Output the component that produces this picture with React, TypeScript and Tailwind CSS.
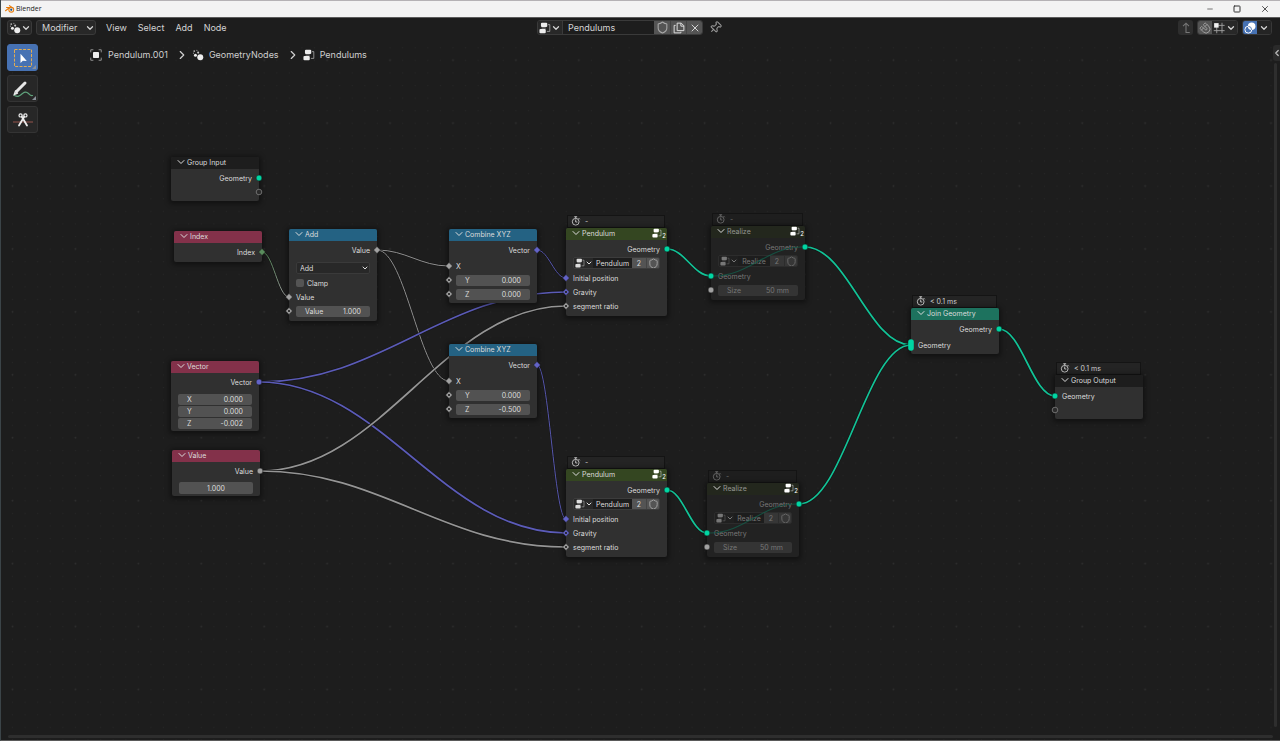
import React, { useState } from "react";
import { ChevronDown, ChevronLeft, ChevronRight, Magnet, Minus, Pin, Shield, Square, X } from "lucide-react";

type SocketShape = "circle" | "diamond" | "diamondDot" | "virtual" | "multi";

interface SocketProps {
  shape: SocketShape;
  color: string;
  side: "left" | "right";
}

const GEOMETRY = "#00d6a3";
const VECTOR = "#6363c7";
const FLOAT = "#a1a1a1";
const INTEGER = "#598c5c";

const Socket: React.FC<SocketProps> = ({ shape, color, side }) => (
  <svg
    viewBox="0 0 14 14"
    className={`absolute top-0 h-[14px] w-[14px] ${side === "left" ? "left-[-7px]" : "right-[-7px]"}`}
  >
    {shape === "circle" && <circle cx="7" cy="7" r="2.9" fill={color} stroke="#151515" strokeWidth="0.5" />}
    {shape === "virtual" && <circle cx="7" cy="7" r="2.8" fill="#2c2c2c" stroke="#757575" strokeWidth="0.9" />}
    {shape === "multi" && <rect x="4.2" y="1.2" width="5.6" height="11.6" rx="2.8" fill={color} />}
    {(shape === "diamond" || shape === "diamondDot") && (
      <path d="M7 3.6 10.4 7 7 10.4 3.6 7Z" fill={color} stroke="#151515" strokeWidth="0.4" />
    )}
    {shape === "diamondDot" && <circle cx="7" cy="7" r="1.1" fill="#1b1b1b" />}
  </svg>
);

const GeometryNodesIcon = ({ className }: { className: string }) => (
  <svg viewBox="0 0 16 16" className={className} fill="currentColor">
    <circle cx="11" cy="11" r="4" />
    <circle cx="4.6" cy="8.4" r="2" />
    <circle cx="8.2" cy="4.8" r="1.4" opacity="0.8" />
    <circle cx="3" cy="2.8" r="1.2" opacity="0.7" />
    <circle cx="6.5" cy="1.8" r="0.8" opacity="0.6" />
    <circle cx="2" cy="5.6" r="0.8" opacity="0.6" />
  </svg>
);

const NodeTreeIcon = ({ className }: { className: string }) => (
  <svg viewBox="0 0 16 16" className={className}>
    <rect x="2.6" y="1" width="8.4" height="5.6" rx="1.4" fill="currentColor" />
    <rect x="0.6" y="9.4" width="8.4" height="5.6" rx="1.4" fill="currentColor" />
    <path d="M12 3.5h2.4v9H10.5M3.5 8h5.5" fill="none" stroke="currentColor" strokeWidth="1.2" opacity="0.6" />
  </svg>
);

const ObjectIcon = () => (
  <svg viewBox="0 0 16 16" className="h-3 w-3">
    <rect x="4" y="4" width="8" height="8" rx="1" fill="#ededed" />
    <path
      d="M1 4.5V1h3.5M11.5 1H15v3.5M15 11.5V15h-3.5M4.5 15H1v-3.5"
      fill="none"
      stroke="#9a9a9a"
      strokeWidth="1.2"
    />
  </svg>
);

const StopwatchIcon = () => (
  <svg viewBox="0 0 16 16" className="h-[10px] w-[10px]" fill="none" stroke="currentColor" strokeWidth="1.4">
    <circle cx="7.5" cy="9.2" r="5.4" />
    <path d="M5.2 1.2h4.6M7.5 1.2v2.6M7.5 5.6v4h2.6M12 3.2l2 2" />
  </svg>
);

const DuplicateIcon = () => (
  <svg viewBox="0 0 16 16" className="h-3 w-3" fill="none" stroke="#e0e0e0" strokeWidth="1.3">
    <path d="M5.5 1.5h5.5l3.5 3.5v6.5h-9zM10.5 1.5v4h4" />
    <path d="M3.5 4.5h-2v10h9v-1.5" />
  </svg>
);

const SnapGridIcon = () => (
  <svg viewBox="0 0 16 16" className="h-3 w-3" fill="none" stroke="#a0a0a0" strokeWidth="1.2">
    <path d="M5 6v9M12 1v14M7 4.5h8.5M1 11.5h14.5" />
    <rect x="1.5" y="1.5" width="6" height="6" fill="#f0f0f0" stroke="none" />
  </svg>
);

const OverlayIcon = () => (
  <svg viewBox="0 0 16 16" className="h-3 w-3">
    <circle cx="10.2" cy="5.8" r="5" fill="#fff" />
    <circle cx="5.8" cy="10.2" r="4.6" fill="none" stroke="#fff" strokeWidth="1.3" />
    <path d="M5.8 5.8a4.6 4.6 0 0 1 4.4 4.6" fill="none" stroke="#4772b3" strokeWidth="1.2" />
  </svg>
);

const BlenderLogo = () => (
  <svg viewBox="0 0 20 16" className="h-2 w-[10px]">
    <path d="M9 1.2 17 7.2M1 11.5 10 4.5M3 5h9" stroke="#e87d0d" strokeWidth="2.2" strokeLinecap="round" />
    <circle cx="12.5" cy="9.5" r="5.8" fill="#e87d0d" />
    <circle cx="12.5" cy="9.5" r="3.7" fill="#fff" />
    <circle cx="12.5" cy="9.5" r="2.3" fill="#265787" />
  </svg>
);

const TitleBar = () => (
  <div className="flex h-[18px] shrink-0 items-center justify-between border-t border-b border-t-[#b5b2b5] border-b-[#5c5c5c] bg-[#f3f3f3] pl-[4px] font-['Open_Sans',sans-serif] text-[7px] text-[#222]">
    <div className="flex items-center gap-[1px]">
      <BlenderLogo />
      <span>Blender</span>
    </div>
    <div className="flex items-center gap-[19px] pr-[10px] text-[#333]">
      <button aria-label="Minimize">
        <Minus size={8} strokeWidth={2} />
      </button>
      <button aria-label="Maximize">
        <Square size={8} strokeWidth={3} />
      </button>
      <button aria-label="Close">
        <X size={10} strokeWidth={2} />
      </button>
    </div>
  </div>
);

const Header = () => {
  const [treeName, setTreeName] = useState("Pendulums");

  return (
    <header className="grid h-5 shrink-0 grid-cols-[1fr_auto_1fr] items-center pr-[8px] pb-[1px] pl-[6px] text-[9px] text-[#d4d4d4]">
      <div className="flex items-center">
        <button
          aria-label="Editor type"
          className="flex h-[15px] w-[25px] items-center justify-center rounded-[3px] border border-[#3a3a3a] bg-[#282828]"
        >
          <GeometryNodesIcon className="h-3 w-3 text-[#ededed]" />
          <ChevronDown size={10} strokeWidth={3} />
        </button>
        <div className="relative ml-[4px] flex items-center">
          <select
            aria-label="Node tree type"
            className="h-[15px] w-[60px] appearance-none rounded-[3px] border border-[#3a3a3a] bg-[#282828] pl-[5px] leading-none outline-none"
          >
            <option>Modifier</option>
          </select>
          <ChevronDown size={10} strokeWidth={3} className="pointer-events-none absolute right-[1px]" />
        </div>
        <nav className="ml-[10px] flex gap-[11px]">
          <button>View</button>
          <button>Select</button>
          <button>Add</button>
          <button>Node</button>
        </nav>
      </div>

      <div className="flex items-center pr-5">
        <div className="flex h-[15px] overflow-hidden rounded-[3px] border border-[#3a3a3a]">
          <button aria-label="Browse node trees" className="flex w-6 items-center justify-center bg-[#282828]">
            <NodeTreeIcon className="h-3 w-3 text-[#ededed]" />
            <ChevronDown size={10} strokeWidth={3} />
          </button>
          <input
            aria-label="Node tree name"
            value={treeName}
            onChange={(e) => setTreeName(e.target.value)}
            className="w-[92px] border-l border-[#3a3a3a] bg-[#1d1d1d] pl-[5px] outline-none"
          />
          <button aria-label="Fake user" className="flex w-4 items-center justify-center bg-[#545454] text-[#a8a8a8]">
            <Shield size={13} strokeWidth={2} className="shrink-0" />
          </button>
          <button
            aria-label="New node tree"
            className="flex w-4 items-center justify-center border-l border-[#444] bg-[#545454]"
          >
            <DuplicateIcon />
          </button>
          <button aria-label="Unlink" className="flex w-4 items-center justify-center border-l border-[#444] bg-[#545454]">
            <X size={12} strokeWidth={2} />
          </button>
        </div>
        <button aria-label="Pin" className="ml-[6px] text-[#999]">
          <Pin size={13} strokeWidth={2} className="rotate-45" />
        </button>
      </div>

      <div className="flex items-center justify-end">
        <button
          aria-label="Parent node tree"
          className="flex h-[15px] w-[15px] items-center justify-center rounded-[3px] bg-[#2e2e2e] text-[#777]"
        >
          <svg viewBox="0 0 16 16" className="h-3 w-3" fill="none" stroke="currentColor" strokeWidth="1.4">
            <path d="M4 5.5 8 1.5 12 5.5M8 1.5v12.500h5" />
          </svg>
        </button>
        <div className="ml-1 flex h-[15px] overflow-hidden rounded-[3px] border border-[#383838]">
          <button aria-label="Snap" className="flex w-[14px] items-center justify-center bg-[#545454] text-[#a0a0a0]">
            <Magnet size={12} strokeWidth={2} className="shrink-0 rotate-90" />
          </button>
          <button aria-label="Snapping" className="flex w-[25px] items-center justify-center gap-[1px] bg-[#282828]">
            <SnapGridIcon />
            <ChevronDown size={10} strokeWidth={3} />
          </button>
        </div>
        <div className="ml-1 flex h-[15px] overflow-hidden rounded-[3px] border border-[#383838]">
          <button aria-label="Overlays" className="flex w-[14px] items-center justify-center bg-[#4772b3]">
            <OverlayIcon />
          </button>
          <button aria-label="Overlay options" className="flex w-[14px] items-center justify-center bg-[#242424]">
            <ChevronDown size={10} strokeWidth={3} />
          </button>
        </div>
      </div>
    </header>
  );
};

const ToolButton = ({
  label,
  active,
  menu,
  children,
}: {
  label: string;
  active?: boolean;
  menu?: boolean;
  children: React.ReactNode;
}) => (
  <button
    aria-label={label}
    className={`relative flex h-[27px] w-[31px] items-center justify-center rounded-[3px] border ${
      active ? "border-[#4772b3] bg-[#4772b3]" : "border-[#343434] bg-[#272727]"
    }`}
  >
    {children}
    {menu && (
      <svg viewBox="0 0 4 4" className="absolute right-[1px] bottom-[1px] h-1 w-1">
        <path d="M4 0v4H0z" fill="#8a9099" />
      </svg>
    )}
  </button>
);

const Toolbar = () => (
  <div className="flex flex-col gap-[4px]">
    <ToolButton label="Select Box" active menu>
      <svg viewBox="0 0 20 20" className="h-5 w-5">
        <rect x="1.5" y="1.5" width="17" height="17" fill="none" stroke="#e3ad52" strokeWidth="1" strokeDasharray="3 1.3" />
        <path d="M7.5 5.800v9.200l2.300-2.200 4 .200z" fill="#fff" />
      </svg>
    </ToolButton>
    <ToolButton label="Annotate" menu>
      <svg viewBox="0 0 20 20" className="h-5 w-5" fill="none" strokeLinecap="round">
        <path d="M1.500 16.500c4 2 5.500 0 8-2s4.500-1.500 6 0 2 2.500 4 2" stroke="#5fa37c" strokeWidth="1.2" />
        <path d="M3.500 12.500 12 4" stroke="#e8e8e8" strokeWidth="3" />
        <path d="M2.500 12 1.300 15.500 4.500 14" stroke="#e8e8e8" strokeWidth="1.4" />
      </svg>
    </ToolButton>
    <ToolButton label="Links Cut">
      <svg viewBox="0 0 20 20" className="h-5 w-5" fill="none">
        <path d="M0 12h20" stroke="#96544d" strokeWidth="1" />
        <path d="M6 15.500 11.300 6.500M14 15.500 8.700 6.500" stroke="#ededed" strokeWidth="1.800" strokeLinecap="round" />
        <circle cx="7.600" cy="5.400" r="1.600" stroke="#ededed" strokeWidth="1.200" />
        <circle cx="12.400" cy="5.400" r="1.600" stroke="#ededed" strokeWidth="1.200" />
      </svg>
    </ToolButton>
  </div>
);

const Breadcrumbs = () => (
  <div className="flex h-[22px] items-center text-[9px] text-[#cfcfcf]">
    <ObjectIcon />
    <span className="ml-[6px]">Pendulum.001</span>
    <ChevronRight size={14} strokeWidth={2} className="mr-[3px] ml-[7px]" />
    <GeometryNodesIcon className="h-3 w-3 text-[#ededed]" />
    <span className="ml-[5px]">GeometryNodes</span>
    <ChevronRight size={14} strokeWidth={2} className="mr-[3px] ml-[7px]" />
    <NodeTreeIcon className="h-3 w-3 text-[#ededed]" />
    <span className="ml-[5px]">Pendulums</span>
  </div>
);

interface NodeProps {
  title: string;
  // position and width on the canvas
  place: string;
  header: string;
  timing?: string;
  muted?: boolean;
  group?: boolean;
  children: React.ReactNode;
}

const Node: React.FC<NodeProps> = ({ title, place, header, timing, muted, group, children }) => (
  <section className={`absolute flex flex-col ${place}`}>
    {timing && (
      <div
        className={`mr-[2px] ml-[1px] flex h-[13px] items-center gap-[4px] border border-[#141414] pb-[1px] pl-[3px] ${
          muted ? "bg-[#1e1e1e] text-[#6d6d6d]" : "bg-[#242424] text-[#cfcfcf]"
        }`}
      >
        <StopwatchIcon />
        <span>{timing}</span>
      </div>
    )}
    <div className={`rounded-[2px] shadow-[0_1px_5px_2px_rgba(0,0,0,0.4)] ${muted ? "bg-[#222222]" : "bg-[#303030]"}`}>
      <div className={`flex h-3 items-center rounded-t-[2px] pr-[1px] pb-[2px] pl-[4px] ${header}`}>
        <button aria-label={`Collapse ${title}`}>
          <ChevronDown size={12} strokeWidth={2} />
        </button>
        <span className={muted ? "opacity-60" : ""}>{title}</span>
        {group && (
          <span className="ml-auto flex items-center text-white">
            <NodeTreeIcon className="h-[10px] w-[10px]" />
            <span className="pt-[5px] text-[6px]">2</span>
          </span>
        )}
      </div>
      <div className="pt-[2px]">{children}</div>
    </div>
  </section>
);

const Output = ({ label, shape, color }: { label: string; shape: SocketShape; color: string }) => (
  <div className="relative flex h-[14px] items-center justify-end px-[7px]">
    {label}
    <Socket shape={shape} color={color} side="right" />
  </div>
);

const Input = ({ label, shape, color }: { label: string; shape: SocketShape; color: string }) => (
  <div className="relative flex h-[14px] items-center px-[7px]">
    {label}
    <Socket shape={shape} color={color} side="left" />
  </div>
);

const NumberField = ({ label, value, muted }: { label: string; value: string; muted?: boolean }) => (
  <label
    className={`flex h-[11px] w-full items-center rounded-[2px] px-[9px] ${muted ? "bg-[#343434]" : "bg-[#525252]"}`}
  >
    <span>{label}</span>
    <input defaultValue={value} className="w-0 min-w-0 flex-1 text-right outline-none" />
  </label>
);

interface FieldInputProps {
  label: string;
  value: string;
  shape?: SocketShape;
  muted?: boolean;
}

const FieldInput = ({ label, value, shape = "diamondDot", muted }: FieldInputProps) => (
  <div className="relative flex h-[14px] items-center px-[7px]">
    <NumberField label={label} value={value} muted={muted} />
    <Socket shape={shape} color={FLOAT} side="left" />
  </div>
);

const GroupSelector = ({ name, muted }: { name: string; muted?: boolean }) => (
  <div className="flex h-[14px] items-center px-[7px]">
    <div
      className={`flex h-[12px] w-full overflow-hidden rounded-[2px] border ${
        muted ? "border-[#2c2c2c]" : "border-[#3c3c3c]"
      }`}
    >
      <button
        aria-label="Browse groups"
        className={`flex w-[19px] shrink-0 items-center justify-center ${muted ? "bg-[#202020]" : "bg-[#282828]"}`}
      >
        <NodeTreeIcon className="h-[10px] w-[10px]" />
        <ChevronDown size={8} strokeWidth={3} />
      </button>
      <input
        aria-label="Group name"
        defaultValue={name}
        className="w-0 min-w-0 flex-1 bg-[#1d1d1d] text-center outline-none"
      />
      <button aria-label="Users" className={`w-[14px] shrink-0 ${muted ? "bg-[#363636]" : "bg-[#545454]"}`}>
        2
      </button>
      <button
        aria-label="Fake user"
        className={`flex w-[13px] shrink-0 items-center justify-center border-l ${
          muted ? "border-[#2c2c2c] bg-[#363636] text-[#6c6c6c]" : "border-[#444] bg-[#545454] text-[#a8a8a8]"
        }`}
      >
        <Shield size={11} strokeWidth={2} className="shrink-0" />
      </button>
    </div>
  </div>
);

const PendulumNode = ({ place }: { place: string }) => (
  <Node title="Pendulum" place={place} header="bg-[#344621]" timing="-" group>
    <div className="pb-[3px]">
      <Output label="Geometry" shape="circle" color={GEOMETRY} />
      <GroupSelector name="Pendulum" />
      <div className="mt-[1px]">
        <Input label="Initial position" shape="diamond" color={VECTOR} />
        <Input label="Gravity" shape="diamondDot" color={VECTOR} />
        <Input label="segment ratio" shape="diamondDot" color={FLOAT} />
      </div>
    </div>
  </Node>
);

const RealizeNode = ({ place }: { place: string }) => (
  <Node title="Realize" place={place} header="bg-[#23271d]" timing="-" muted group>
    <div className="relative pb-[3px]">
      <div className="text-[#777]">
        <Output label="Geometry" shape="circle" color={GEOMETRY} />
        <GroupSelector name="Realize" muted />
        <div className="mt-[1px]">
          <Input label="Geometry" shape="circle" color={GEOMETRY} />
          <FieldInput label="Size" value="50 mm" shape="circle" muted />
        </div>
      </div>
      {/* pass-through link of the muted node */}
      <svg
        viewBox="0 0 94 60"
        preserveAspectRatio="none"
        className="pointer-events-none absolute inset-0 h-[60px] w-full"
        fill="none"
      >
        <path d="M3 36C38 36 56 7 91 7" stroke="#12634f" strokeWidth="1.2" opacity="0.7" />
      </svg>
    </div>
  </Node>
);

const CombineNode = ({ place, z }: { place: string; z: string }) => (
  <Node title="Combine XYZ" place={place} header="bg-[#246283]">
    <div className="pb-[2px]">
      <Output label="Vector" shape="diamond" color={VECTOR} />
      <div className="mt-[2px]">
        <Input label="X" shape="diamond" color={FLOAT} />
        <FieldInput label="Y" value="0.000" />
        <FieldInput label="Z" value={z} />
      </div>
    </div>
  </Node>
);

interface Link {
  from: [number, number];
  to: [number, number];
  color: string;
  // field links are drawn thin
  thin?: boolean;
}

const links: Link[] = [
  { from: [262, 214], to: [289, 259], color: "url(#int-to-float)", thin: true },
  { from: [377, 212], to: [449, 228], color: "#8f8f8f", thin: true },
  { from: [377, 212], to: [449, 343], color: "#8f8f8f", thin: true },
  { from: [537, 212], to: [566, 240], color: "#5656ad", thin: true },
  { from: [537, 327], to: [566, 481], color: "#5656ad", thin: true },
  { from: [259, 344], to: [566, 254], color: "#5b5bb8" },
  { from: [259, 344], to: [566, 495], color: "#5b5bb8" },
  { from: [260, 433], to: [566, 268], color: "#959595" },
  { from: [260, 433], to: [566, 509], color: "#959595" },
  { from: [667, 211], to: [711, 238], color: "#12c397" },
  { from: [667, 452], to: [707, 495], color: "#12c397" },
  { from: [805, 209], to: [911, 307], color: "#12c397" },
  { from: [799, 466], to: [911, 307], color: "#12c397" },
  { from: [999, 291], to: [1055, 358], color: "#12c397" },
];

const linkPath = ({ from, to }: Link) => {
  const handle = (to[0] - from[0]) * 0.4;
  return `M${from[0]} ${from[1]}C${from[0] + handle} ${from[1]} ${to[0] - handle} ${to[1]} ${to[0]} ${to[1]}`;
};

const CanvasBackground = () => (
  <svg className="absolute inset-0 h-full w-full" fill="none">
    <defs>
      <pattern id="minor" x="6.2" y="3.4" width="12.585" height="12.585" patternUnits="userSpaceOnUse">
        <circle cx="6.3" cy="6.3" r="0.6" fill="#272727" />
      </pattern>
      <pattern id="major" x="-19" y="-9.5" width="62.925" height="62.925" patternUnits="userSpaceOnUse">
        <circle cx="31.5" cy="31.5" r="0.9" fill="#2e2e2e" />
      </pattern>
      <linearGradient id="int-to-float" x1="0" y1="0" x2="0" y2="1">
        <stop offset="0" stopColor="#4f8052" />
        <stop offset="1" stopColor="#9a9a9a" />
      </linearGradient>
    </defs>
    <rect y="8" width="100%" height="100%" fill="url(#minor)" />
    <rect y="8" width="100%" height="100%" fill="url(#major)" />
    {links.map((link, index) => (
      <g key={index}>
        <path d={linkPath(link)} stroke="#161616" strokeWidth={link.thin ? 2 : 3} />
        <path d={linkPath(link)} stroke={link.color} strokeWidth={link.thin ? 1 : 1.7} />
      </g>
    ))}
  </svg>
);

const NodeCanvas = () => (
  <div className="absolute inset-0 text-[7px] leading-none text-[#dcdcdc]">
    <CanvasBackground />

    <Node title="Group Input" place="top-[119px] left-[171px] w-[88px]" header="bg-[#1d1d1d]">
      <div className="pb-[2px]">
        <Output label="Geometry" shape="circle" color={GEOMETRY} />
        <Output label="" shape="virtual" color={FLOAT} />
      </div>
    </Node>

    <Node title="Index" place="top-[193px] left-[174px] w-[88px]" header="bg-[#83314a]">
      <div className="pb-[3px]">
        <Output label="Index" shape="diamond" color={INTEGER} />
      </div>
    </Node>

    <Node title="Add" place="top-[191px] left-[289px] w-[88px]" header="bg-[#246283]">
      <div className="pb-[3px]">
        <Output label="Value" shape="diamond" color={FLOAT} />
        <div className="relative mx-[7px] mt-1 flex h-[14px] items-center">
          <select
            aria-label="Operation"
            className="h-[12px] w-full appearance-none rounded-[2px] border border-[#3a3a3a] bg-[#282828] pl-[3px] leading-none outline-none"
          >
            <option>Add</option>
          </select>
          <ChevronDown size={8} strokeWidth={3} className="pointer-events-none absolute right-[1px]" />
        </div>
        <label className="mx-[7px] mt-[1px] flex h-[14px] items-center gap-[3px]">
          <input type="checkbox" className="h-2 w-2 appearance-none rounded-[2px] bg-[#545454] checked:bg-[#4772b3]" />
          Clamp
        </label>
        <Input label="Value" shape="diamond" color={FLOAT} />
        <FieldInput label="Value" value="1.000" />
      </div>
    </Node>

    <Node title="Vector" place="top-[323px] left-[171px] w-[88px]" header="bg-[#83314a]">
      <div className="pb-[2px]">
        <Output label="Vector" shape="circle" color={VECTOR} />
        <div className="mx-[7px] mt-[5px] flex flex-col gap-[1px]">
          <NumberField label="X" value="0.000" />
          <NumberField label="Y" value="0.000" />
          <NumberField label="Z" value="-0.002" />
        </div>
      </div>
    </Node>

    <Node title="Value" place="top-[412px] left-[172px] w-[88px]" header="bg-[#83314a]">
      <div className="pb-[2px]">
        <Output label="Value" shape="circle" color={FLOAT} />
        <div className="mx-[7px] mt-1 flex h-3">
          <input
            aria-label="Value"
            defaultValue="1.000"
            className="w-full rounded-[2px] bg-[#525252] text-center outline-none"
          />
        </div>
      </div>
    </Node>

    <CombineNode place="top-[191px] left-[449px] w-[88px]" z="0.000" />
    <CombineNode place="top-[306px] left-[449px] w-[88px]" z="-0.500" />

    <PendulumNode place="top-[177px] left-[566px] w-[101px]" />
    <PendulumNode place="top-[418px] left-[566px] w-[101px]" />

    <RealizeNode place="top-[175px] left-[711px] w-[94px]" />
    <RealizeNode place="top-[432px] left-[707px] w-[92px]" />

    <Node title="Join Geometry" place="top-[257px] left-[911px] w-[88px]" header="bg-[#1d725e]" timing="< 0.1 ms">
      <div className="pb-[2px]">
        <Output label="Geometry" shape="circle" color={GEOMETRY} />
        <div className="mt-[2px]">
          <Input label="Geometry" shape="multi" color={GEOMETRY} />
        </div>
      </div>
    </Node>

    <Node title="Group Output" place="top-[324px] left-[1055px] w-[88px]" header="bg-[#1d1d1d]" timing="< 0.1 ms">
      <div className="pb-[2px]">
        <Input label="Geometry" shape="circle" color={GEOMETRY} />
        <Input label="" shape="virtual" color={FLOAT} />
      </div>
    </Node>
  </div>
);

export default function App() {
  return (
    <div className="flex min-h-screen flex-col border-b border-l border-b-[#5a5a5a] border-l-[#3b4448] bg-[#1d1d1d] font-[Inter,sans-serif]">
      <TitleBar />
      <Header />
      <main className="relative flex flex-1 flex-col overflow-hidden">
        {/* canvas coordinates start at the window edge */}
        <div className="absolute inset-0 -left-px">
          <NodeCanvas />
        </div>
        <div className="relative flex flex-1 items-start pt-[6px] pl-[6px]">
          <Toolbar />
          <div className="ml-[52px]">
            <Breadcrumbs />
          </div>
          <div className="ml-auto flex flex-col items-end self-stretch">
            <button
              aria-label="Show sidebar"
              className="mt-[1px] flex h-4 w-[7px] items-center justify-center rounded-l-[3px] bg-[#2a2a2a] text-[#bbb]"
            >
              <ChevronLeft size={10} strokeWidth={3} className="shrink-0" />
            </button>
            <div className="mt-[2px] mr-[3px] w-[3px] flex-1 rounded-full bg-[#2e2e2e]" />
          </div>
        </div>
        <div className="relative mx-[7px] mt-[8px] mb-[2px] h-[3px] rounded-full bg-[#2e2e2e]" />
      </main>
    </div>
  );
}
